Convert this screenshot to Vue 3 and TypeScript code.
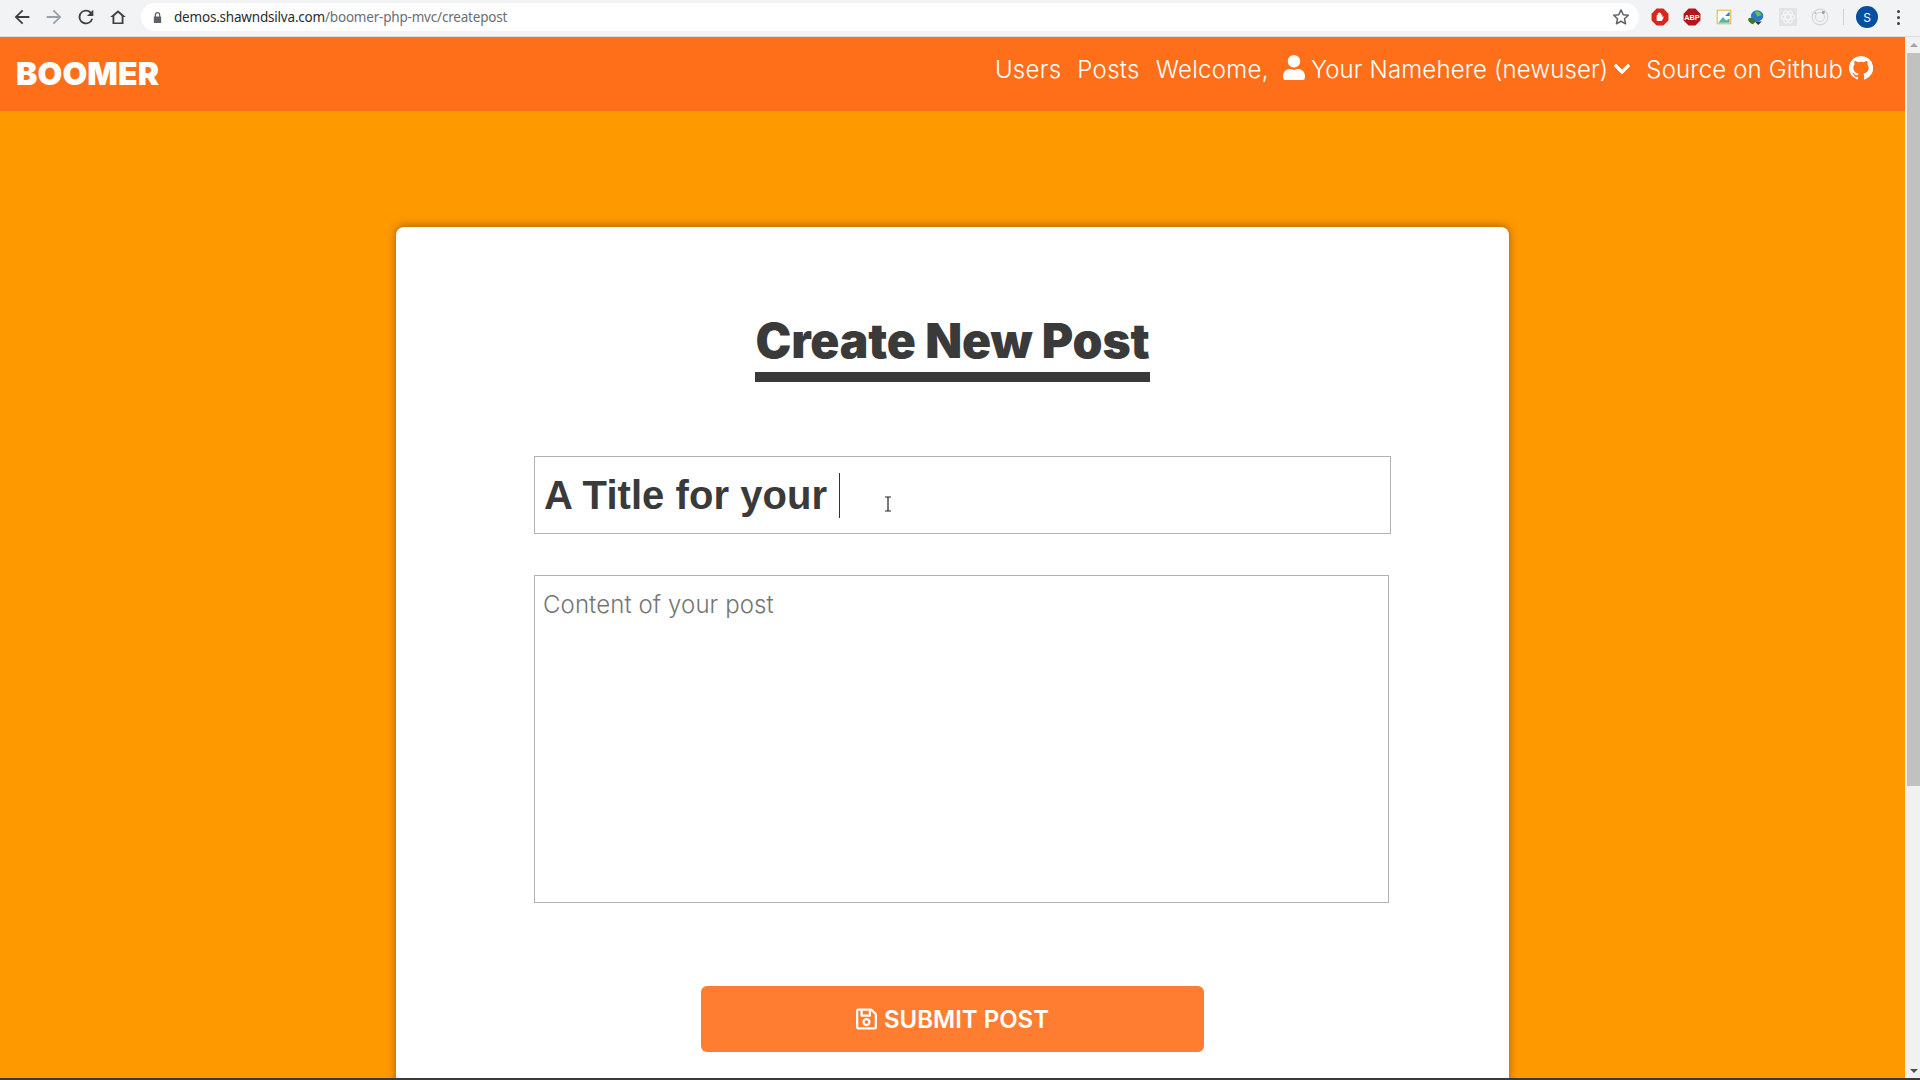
<script setup lang="ts">
const navLinks: string[] = ['Users', 'Posts', 'Welcome,']
</script>

<template>
  <div class="screen">
    <div class="browser-bar">
      <div class="browser-nav">
        <svg class="tool" viewBox="0 0 24 24"><path d="M20 11H7.8l5.6-5.6L12 4l-8 8 8 8 1.4-1.4L7.8 13H20z" fill="#3c4043" /></svg>
        <svg class="tool" viewBox="0 0 24 24"><path d="M4 11h12.2l-5.6-5.6L12 4l8 8-8 8-1.4-1.4 5.6-5.6H4z" fill="#9aa0a6" /></svg>
        <svg class="tool" viewBox="0 0 24 24"><path d="M17.65 6.35A8 8 0 1 0 19.73 14h-2.08A6 6 0 1 1 12 6c1.66 0 3.14.69 4.22 1.78L13 11h7V4z" fill="#3c4043" /></svg>
        <svg class="tool" viewBox="0 0 24 24"><path d="M12 4.5 3.5 12H6v7.5h12V12h2.500z M8 18v-7l4-3.600 4 3.600v7z" fill="#3c4043" fill-rule="evenodd" /></svg>
      </div>
      <div class="omnibox">
        <svg class="lock" viewBox="0 0 12 14"><path d="M3 6V4a3 3 0 0 1 6 0v2h1v7H2V6zm1.300 0h3.400V4a1.700 1.700 0 0 0-3.400 0z" fill="#5f6368" /></svg>
        <span class="url"><span class="host">demos.shawndsilva.com</span>/boomer-php-mvc/createpost</span>
        <svg class="star" viewBox="0 0 24 24"><path d="m12 3.500 2.600 5.700 6.200.7-4.600 4.200 1.300 6.100L12 17.100l-5.500 3.100 1.300-6.100-4.600-4.200 6.200-.7z" fill="none" stroke="#5f6368" stroke-width="1.800" stroke-linejoin="round" /></svg>
      </div>
      <div class="extensions">
        <svg class="ext" viewBox="0 0 16 16"><path d="M5 .5h6L15.500 5v6L11 15.500H5L.5 11V5z" fill="#d9261c" /><path d="M5 11V6.500h1V4.500h1V4h1v.500h1V6h1v2l1-1v2l-1.500 2.500H6z" fill="#fff" /></svg>
        <svg class="ext" viewBox="0 0 16 16"><path d="M5 .5h6L15.500 5v6L11 15.500H5L.5 11V5z" fill="#b3151c" /><text x="8" y="10.500" text-anchor="middle" class="abp">ABP</text></svg>
        <svg class="ext" viewBox="0 0 16 16"><rect x="2" y="2" width="12" height="12" fill="#fff" stroke="#e8b84a" /><path d="M3 13 7 8l3 3 3-2v4z" fill="#57b5a3" /><path d="M9 7l4-4v4z" fill="#2f7fd6" /></svg>
        <svg class="ext" viewBox="0 0 16 16"><ellipse cx="9" cy="7" rx="5.500" ry="5" fill="#2c77c9" /><path d="M7 3.500c3-1 5 0 6 3l-4 1z" fill="#6cc04a" /><path d="M1 9.500C3 7.500 6 9 8 12l-3 2.500C2.500 13.500 1 11.500 1 9.500z" fill="#3d7a22" /><path d="M7 12h6l-3 3z" fill="#2a3f1d" /></svg>
        <svg class="ext" viewBox="0 0 16 16"><rect width="16" height="16" fill="#e2e3e5" /><ellipse cx="8" cy="8" rx="6" ry="2.400" fill="none" stroke="#f6f6f7" /><ellipse cx="8" cy="8" rx="6" ry="2.400" fill="none" stroke="#f6f6f7" transform="rotate(60 8 8)" /><ellipse cx="8" cy="8" rx="6" ry="2.400" fill="none" stroke="#f6f6f7" transform="rotate(120 8 8)" /></svg>
        <svg class="ext" viewBox="0 0 16 16"><circle cx="8" cy="8" r="7" fill="#f3f3f3" stroke="#d4d4d4" /><circle cx="8" cy="8" r="4" fill="none" stroke="#d4d4d4" /><circle cx="11" cy="4" r="1.300" fill="#9b9b9b" /><circle cx="4" cy="4.500" r="0.900" fill="#bbb" /></svg>
        <span class="divider"></span>
        <span class="avatar">S</span>
        <span class="kebab"><i></i><i></i><i></i></span>
      </div>
    </div>

    <div class="viewport">
      <div class="page">
        <header class="navbar">
          <a class="brand">BOOMER</a>
          <nav class="nav-links">
            <a v-for="link in navLinks" :key="link" class="nav-link plain">{{ link }}</a>
            <a class="nav-link with-icon user-link">
              <svg class="user-icon" viewBox="0 0 448 512"><path d="M224 256a128 128 0 1 0 0-256 128 128 0 1 0 0 256zm89.600 32h-16.700a174.100 174.100 0 0 1-145.800 0h-16.700A134.400 134.400 0 0 0 0 422.400V464a48 48 0 0 0 48 48h352a48 48 0 0 0 48-48v-41.600A134.400 134.400 0 0 0 313.600 288z" fill="#fff" /></svg>
              <span>Your Namehere (newuser)</span>
              <svg class="chevron" viewBox="0 0 448 512"><path d="M207 381.500 12.700 187.100a24 24 0 0 1 0-33.900l22.700-22.700a24 24 0 0 1 33.900 0L224 284.500l154.700-154a24 24 0 0 1 33.900 0l22.700 22.700a24 24 0 0 1 0 33.900L241 381.500a24 24 0 0 1-34 0z" fill="#fff" stroke="#fff" stroke-width="24" /></svg>
            </a>
            <a class="nav-link with-icon">
              <span>Source on Github</span>
              <svg class="github" viewBox="0 0 16 16"><path d="M8 0a8 8 0 0 0-2.530 15.590c.4.070.55-.170.55-.380v-1.340c-2.230.480-2.700-1.070-2.700-1.070-.360-.920-.890-1.170-.890-1.170-.730-.500.050-.490.050-.490.800.060 1.230.830 1.230.830.710 1.220 1.870.870 2.330.660.070-.520.280-.870.510-1.070-1.780-.200-3.640-.890-3.640-3.950 0-.870.310-1.590.820-2.150-.080-.200-.360-1.020.080-2.120 0 0 .670-.210 2.200.820a7.600 7.600 0 0 1 4 0c1.530-1.040 2.200-.820 2.200-.820.440 1.100.160 1.920.080 2.120.510.560.820 1.270.820 2.150 0 3.070-1.870 3.750-3.650 3.950.290.250.540.730.540 1.480v2.200c0 .210.150.460.550.380A8 8 0 0 0 8 0z" fill="#fff" /></svg>
            </a>
          </nav>
        </header>

        <main class="content">
          <section class="card">
            <h1 class="title">Create New Post</h1>
            <form class="post-form" @submit.prevent>
              <div class="title-input">
                <span class="typed">A Title for your </span><span class="caret"></span>
                <svg class="ibeam" viewBox="0 0 8 16"><path d="M1 1h6M4 1v14M1 15h6" fill="none" stroke="#222" stroke-width="1.200" /></svg>
              </div>
              <textarea class="body-input" placeholder="Content of your post"></textarea>
              <button class="submit" type="submit">
                <svg class="save" viewBox="0 0 448 512"><path d="m433.900 129.900-83.900-83.900A48 48 0 0 0 316.100 32H48C21.500 32 0 53.500 0 80v352c0 26.500 21.500 48 48 48h352c26.500 0 48-21.500 48-48V163.900a48 48 0 0 0-14.100-34zM272 80v80H144V80h128zm122 352H54a6 6 0 0 1-6-6V86a6 6 0 0 1 6-6h42v104c0 13.300 10.700 24 24 24h176c13.300 0 24-10.700 24-24V83.900l78.200 78.200a6 6 0 0 1 1.800 4.200V426a6 6 0 0 1-6 6zM224 232c-48.500 0-88 39.500-88 88s39.500 88 88 88 88-39.500 88-88-39.500-88-88-88zm0 128c-22.100 0-40-17.900-40-40s17.900-40 40-40 40 17.900 40 40-17.900 40-40 40z" fill="#fff" /></svg>
                SUBMIT POST
              </button>
            </form>
          </section>
        </main>
      </div>
      <div class="scrollbar">
        <span class="arrow up"></span>
        <span class="thumb"></span>
        <span class="arrow down"></span>
      </div>
    </div>
    <div class="bottom-line"></div>
  </div>
</template>

<style>
html, body {
  margin: 0;
  height: 100%;
  overflow: hidden;
}
</style>

<style scoped>
.screen {
  width: 1920px;
  height: 1080px;
  display: flex;
  flex-direction: column;
  overflow: hidden;
  font-family: Inter, "Liberation Sans", sans-serif;
}

.browser-bar {
  height: 37px;
  flex: none;
  display: flex;
  align-items: center;
  background: #f1f3f4;
  box-sizing: border-box;
  padding: 0 0 2px 11px;
  border-bottom: 1px solid #dadce0;
}
.browser-nav {
  display: flex;
  gap: 10px;
}
.tool {
  width: 22px;
  height: 22px;
}
.omnibox {
  width: 1498px;
  height: 28px;
  margin-left: 12px;
  flex: none;
  display: flex;
  align-items: center;
  background: #fff;
  border-radius: 14px;
  box-sizing: border-box;
  padding: 0 8px 0 11px;
}
.lock {
  width: 11px;
  height: 13px;
}
.url {
  margin-left: 11px;
  font-family: "Noto Sans", sans-serif;
  font-size: 13.500px;
  letter-spacing: -0.200px;
  color: #6a6e72;
  flex: 1;
}
.host {
  color: #2a2c2f;
}
.star {
  width: 20px;
  height: 20px;
}
.extensions {
  display: flex;
  align-items: center;
  margin-left: 12px;
  gap: 14px;
}
.ext {
  width: 18px;
  height: 18px;
}
.abp {
  font: 700 6.500px "Liberation Sans", sans-serif;
  fill: #fff;
}
.divider {
  width: 1px;
  height: 16px;
  background: #d0d2d5;
  margin-left: 0;
  margin-right: -2px;
}
.avatar {
  width: 22px;
  height: 22px;
  border-radius: 50%;
  background: #04509f;
  color: #fff;
  font-size: 12px;
  display: flex;
  align-items: center;
  justify-content: center;
}
.kebab {
  display: flex;
  flex-direction: column;
  gap: 3px;
  margin-left: 5px;
}
.kebab i {
  width: 3px;
  height: 3px;
  border-radius: 50%;
  background: #3c4043;
}

.viewport {
  flex: 1;
  min-height: 0;
  display: flex;
}
.page {
  flex: 1;
  min-width: 0;
  display: flex;
  flex-direction: column;
  background: #ff9900;
  overflow: hidden;
}

.navbar {
  height: 74px;
  flex: none;
  display: flex;
  justify-content: space-between;
  background: #ff6f1a;
  padding: 0 16px;
  box-sizing: border-box;
  color: #fff;
}
.brand {
  font-size: 32px;
  font-weight: 900;
  letter-spacing: 0.100px;
  line-height: 73px;
}
.nav-links {
  display: flex;
  gap: 16px;
  font-size: 24px;
  font-weight: 300;
  letter-spacing: 0.150px;
  padding-right: 16px;
}
.nav-link {
  display: flex;
  align-items: center;
  height: 64px;
  white-space: pre;
}
.plain {
  letter-spacing: 0.300px;
}
.with-icon {
  gap: 6px;
}
.user-link {
  margin-left: -2px;
}
.user-icon {
  width: 22px;
  height: 25px;
  margin-top: -3px;
}
.chevron {
  width: 16px;
  height: 18px;
}
.github {
  width: 24px;
  height: 24px;
  margin-top: -3px;
}

.content {
  flex: 1;
  min-height: 0;
  display: flex;
  justify-content: center;
  padding-top: 116px;
}
.card {
  width: 1113px;
  height: 900px;
  background: #fff;
  border-radius: 8px;
  box-shadow: 0 -1px 8px rgba(130, 70, 0, 0.700);
  box-sizing: border-box;
  padding-top: 85px;
  display: flex;
  flex-direction: column;
  align-items: center;
}
.title {
  margin: 0;
  font-size: 48px;
  font-weight: 900;
  line-height: 58px;
  color: #3a3a3a;
  letter-spacing: -0.150px;
  border-bottom: 10px solid #3a3a3a;
  padding-bottom: 2px;
}
.post-form {
  align-self: stretch;
  display: flex;
  flex-direction: column;
  padding: 0 0 0 138px;
  margin-top: 74px;
}
.title-input {
  position: relative;
  width: 857px;
  height: 78px;
  box-sizing: border-box;
  border: 1px solid #b2b2b2;
  display: flex;
  align-items: center;
  padding: 0 9px;
  font-family: "Liberation Sans", Arial, sans-serif;
  font-size: 40px;
  font-weight: 700;
  letter-spacing: 0.050px;
  color: #3a3a3a;
  white-space: pre;
}
.caret {
  width: 1px;
  height: 45px;
  margin-left: 1px;
  background: #333;
}
.ibeam {
  position: absolute;
  left: 349px;
  top: 39px;
  width: 8px;
  height: 16px;
}
.body-input {
  width: 855px;
  height: 328px;
  margin-top: 41px;
  box-sizing: border-box;
  border: 1px solid #b2b2b2;
  padding: 14px 8px;
  font-family: Inter, "Liberation Sans", sans-serif;
  font-size: 24px;
  font-weight: 300;
  letter-spacing: 0.100px;
  resize: none;
  outline: none;
}
.body-input::placeholder {
  color: #757575;
}
.submit {
  width: 503px;
  height: 66px;
  margin: 83px 0 0 167px;
  border: none;
  border-radius: 6px;
  background: #ff7d30;
  color: #fff;
  font-family: Inter, "Liberation Sans", sans-serif;
  font-size: 24px;
  font-weight: 600;
  display: flex;
  align-items: center;
  justify-content: center;
  gap: 7px;
}
.save {
  width: 21px;
  height: 24px;
}

.scrollbar {
  width: 15px;
  flex: none;
  background: #f1f1f1;
  box-sizing: border-box;
  padding-left: 2px;
  display: flex;
  flex-direction: column;
  align-items: center;
}
.thumb {
  width: 100%;
  height: 733px;
  background: #c1c1c1;
  margin-top: 6px;
}
.arrow {
  width: 0;
  height: 0;
  border-left: 4px solid transparent;
  border-right: 4px solid transparent;
}
.arrow.up {
  border-bottom: 4px solid #a3a3a3;
  margin-top: 6px;
}
.arrow.down {
  border-top: 4px solid #505050;
  margin-top: auto;
  margin-bottom: 5px;
}
.bottom-line {
  height: 2px;
  flex: none;
  background: #3a3a3a;
}
</style>
